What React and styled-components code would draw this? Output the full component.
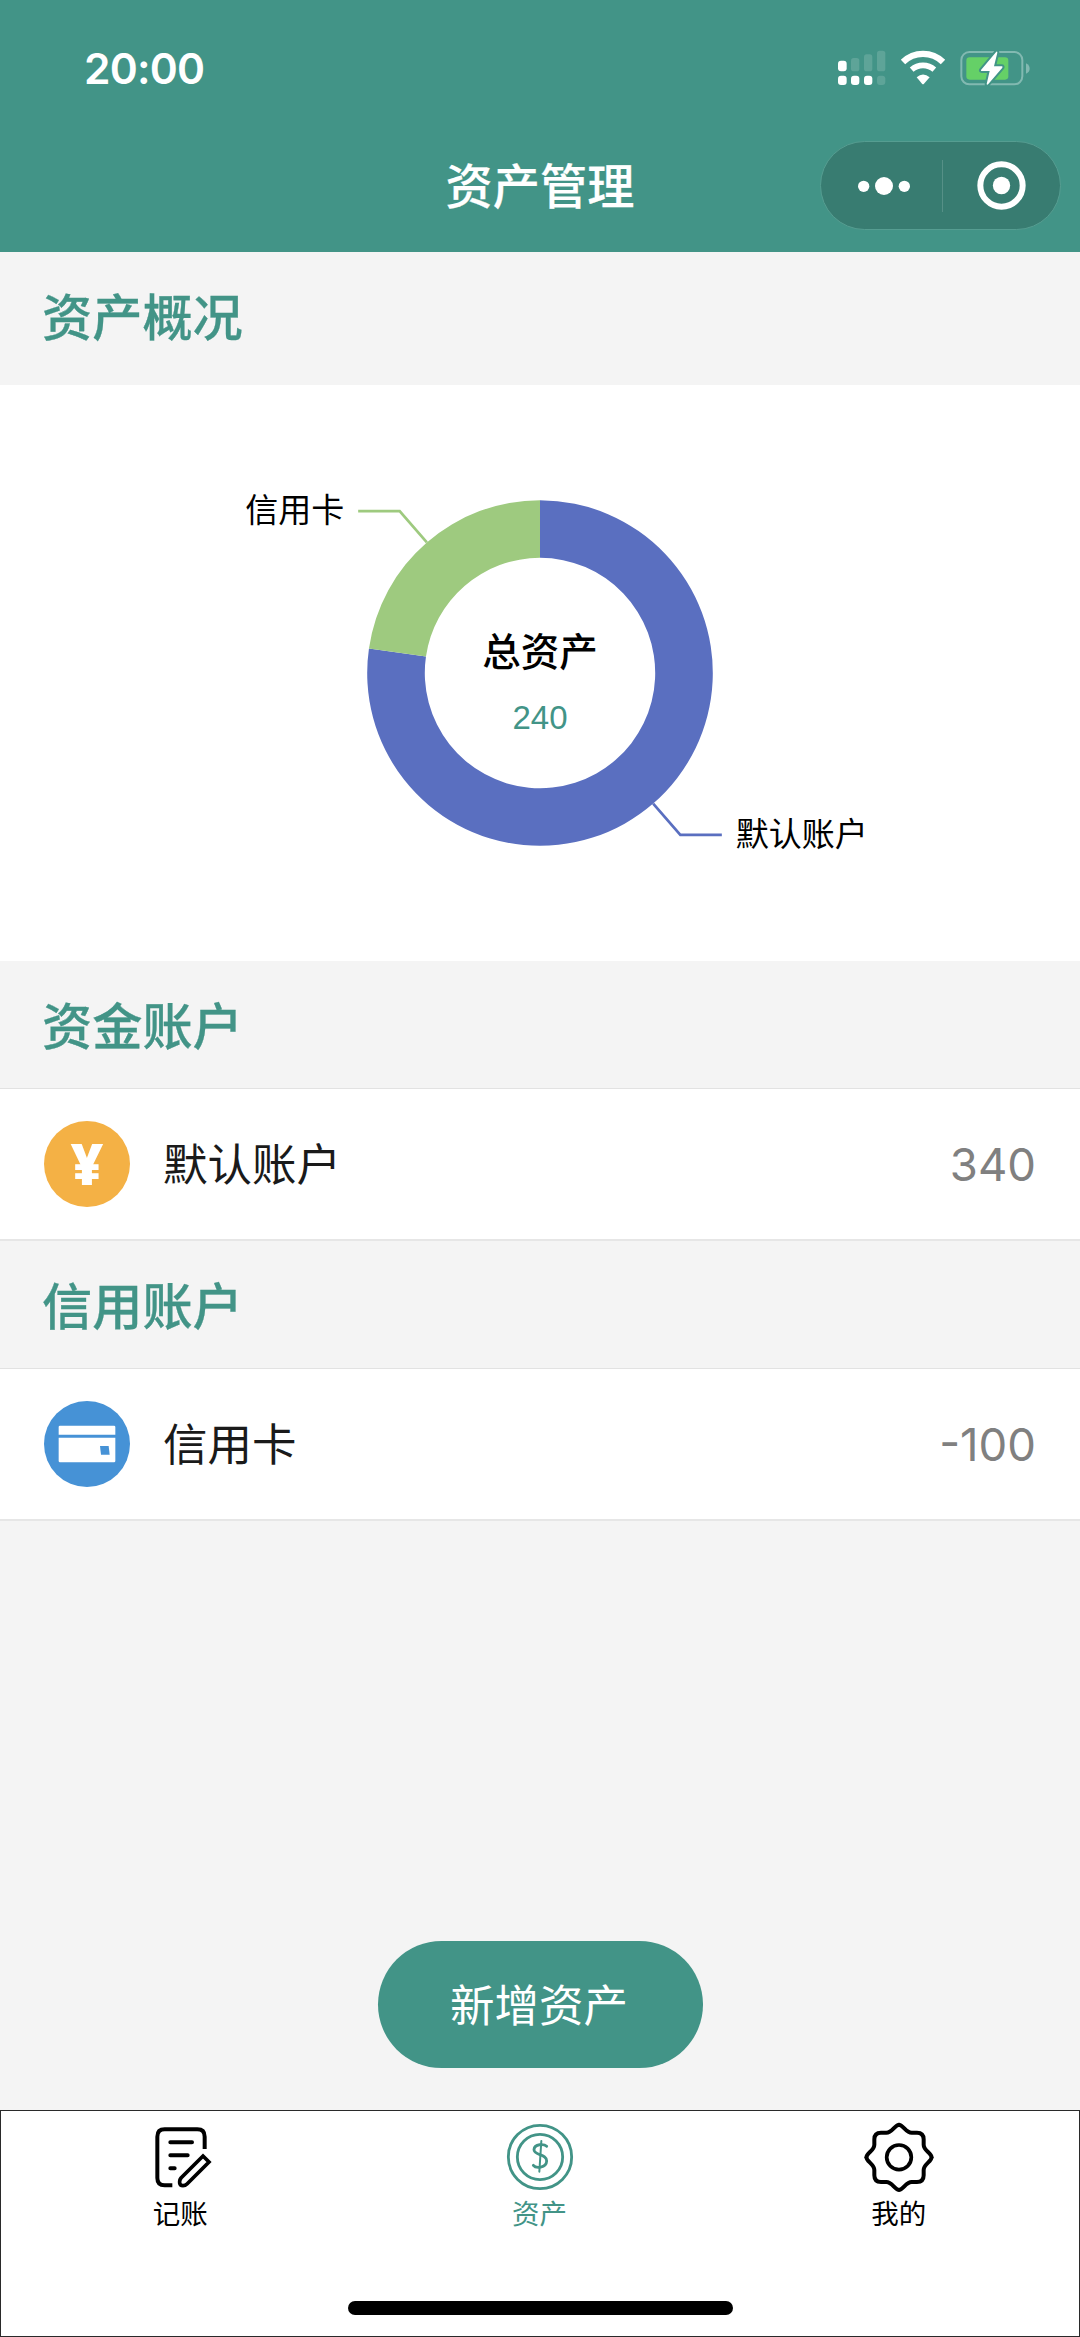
import React from 'react'
import styled, { createGlobalStyle } from 'styled-components'

const teal = '#429487'

const accountGroups = [
  { title: '资金账户', items: [{ name: '默认账户', amount: 340, type: 'cash' }] },
  { title: '信用账户', items: [{ name: '信用卡', amount: -100, type: 'card' }] },
]

const chartData = [
  { name: '默认账户', value: 340, color: '#5a6fc0' },
  { name: '信用卡', value: 100, color: '#9eca7f' },
]

const SignalIcon = () => (
  <svg width="48" height="36" viewBox="171 93 144 108" fill="#fff">
    <rect x="171" y="125" width="26" height="32" rx="9" />
    <rect x="210" y="117" width="25" height="40" rx="8" fillOpacity="0.15" />
    <rect x="249" y="106" width="25" height="51" rx="8" fillOpacity="0.15" />
    <rect x="288" y="95" width="25" height="62" rx="8" fillOpacity="0.15" />
    <rect x="171" y="170" width="26" height="28" rx="9" />
    <rect x="210" y="170" width="25" height="28" rx="9" />
    <rect x="249" y="170" width="25" height="28" rx="9" />
    <rect x="288" y="170" width="25" height="28" rx="9" fillOpacity="0.15" />
  </svg>
)

const WifiIcon = () => (
  <svg width="46" height="36" viewBox="357 90 138 108" fill="none" stroke="#fff">
    <path d="M366 126A86 86 0 0 1 486 126" strokeWidth="19" />
    <path d="M392 149A52 52 0 0 1 460 149" strokeWidth="17" />
    <path d="M407 172Q426 155 446 172L429 191Q426 194 423 191Z" fill="#fff" stroke="none" />
  </svg>
)

const BatteryIcon = () => (
  <svg width="70" height="36" viewBox="539 90 210 108">
    <rect x="543" y="96" width="183" height="97" rx="24" fill="none" stroke="#82b9b1" strokeWidth="6" />
    <rect x="558" y="112" width="126" height="67" rx="10" fill="#65d067" />
    <path d="M737 130Q748 136 748 146Q748 156 737 161Z" fill="#82b9b1" />
    <path
      d="M648 95L602 150Q601 153 604 153H628L619 192Q620 197 624 192L666 143Q668 139 664 139H641L651 98Q651 93 648 95Z"
      fill="#fff" stroke={teal} strokeWidth="12" paintOrder="stroke" strokeLinejoin="round"
    />
  </svg>
)

const MoreIcon = () => (
  <svg width="52" height="18" viewBox="0 0 156 54" fill="#fff">
    <circle cx="17" cy="28" r="17" />
    <circle cx="78" cy="27" r="27" />
    <circle cx="139" cy="28" r="17" />
  </svg>
)

const CloseIcon = () => (
  <svg width="49" height="49" viewBox="0 0 147 147">
    <circle cx="73.5" cy="73.5" r="63.5" fill="none" stroke="#fff" strokeWidth="18" />
    <circle cx="73.5" cy="73.5" r="26" fill="#fff" />
  </svg>
)

const CardIcon = () => (
  <svg width="58" height="38" viewBox="0 0 174 114">
    <path d="M2 29V6Q2 2 6 2H168Q172 2 172 6V29Z" fill="#fff" />
    <path d="M2 38H172V108Q172 112 168 112H6Q2 112 2 108Z" fill="#fff" />
    <path d="M126 63H152L155 89H129Z" fill="#4692d6" />
  </svg>
)

const NoteIcon = () => (
  <svg width="74" height="74" viewBox="0 0 222 222" fill="none" stroke="currentColor" strokeWidth="12">
    <path d="M182 87V50Q182 28 160 28H62Q40 28 40 50V174Q40 196 62 196H85" />
    <path d="M79 67H144M79 105.500H131M79 144.500H92" strokeLinecap="round" />
    <path d="M177 108L195 126L129 192Q124 197 117 197Q108 197 107 189V184Q107 179 111 174Z" strokeWidth="11" />
  </svg>
)

const CoinIcon = () => (
  <svg width="74" height="74" viewBox="0 0 222 222" fill="none" stroke="currentColor" strokeWidth="8.5">
    <circle cx="111" cy="111" r="95" />
    <circle cx="111" cy="111" r="68" />
    <path d="M115 63L109 155" strokeWidth="6" strokeLinecap="round" />
    <path d="M131 79C124 72 94 70 93 89C92 107 132 101 131 123C130 145 98 145 91 136" strokeLinecap="round" />
  </svg>
)

const GearIcon = () => (
  <svg width="74" height="74" viewBox="-111 -112 222 222" fill="none" stroke="currentColor" strokeWidth="12">
    {[0, 90, 180, 270].map((deg) => (
      <path
        key={deg}
        transform={`rotate(${deg})`}
        d="M-1 -98C13 -98 20 -74 38 -74H54Q74 -74 74 -54V-38C74 -20 98 -13 98 1"
      />
    ))}
    <circle r="37" strokeWidth="11" />
  </svg>
)

const tabs = [
  { label: '记账', icon: <NoteIcon /> },
  { label: '资产', icon: <CoinIcon />, active: true },
  { label: '我的', icon: <GearIcon /> },
]

const CX = 540
const CY = 288
const OUTER = 172.8
const INNER = 115.2
const LINE = 41.5

// angle is clockwise from 12 o'clock
const point = (r, angle) => [CX + r * Math.sin(angle), CY - r * Math.cos(angle)]

const AssetChart = () => {
  const sum = chartData.reduce((acc, d) => acc + d.value, 0)
  let start = 0

  return (
    <ChartSvg viewBox="0 0 1080 576">
      {chartData.map((d) => {
        const end = start + (d.value / sum) * Math.PI * 2
        const mid = (start + end) / 2
        const large = end - start > Math.PI ? 1 : 0
        const dir = Math.sin(mid) > 0 ? 1 : -1
        const [x1, y1] = point(OUTER, mid)
        const [x2, y2] = point(OUTER + LINE, mid)
        const x3 = x2 + dir * LINE
        const ring = `M${point(OUTER, start)}A${OUTER} ${OUTER} 0 ${large} 1 ${point(OUTER, end)}L${point(INNER, end)}A${INNER} ${INNER} 0 ${large} 0 ${point(INNER, start)}Z`
        start = end
        return (
          <g key={d.name}>
            <path d={ring} fill={d.color} />
            <polyline points={`${x1},${y1} ${x2},${y2} ${x3},${y2}`} fill="none" stroke={d.color} strokeWidth="2.7" />
            <ChartLabel x={x3 + dir * 14} y={y2 + 11} textAnchor={dir > 0 ? 'start' : 'end'}>{d.name}</ChartLabel>
          </g>
        )
      })}
      <ChartTitle x={CX} y="281">总资产</ChartTitle>
      <ChartTotal x={CX} y="344">240</ChartTotal>
    </ChartSvg>
  )
}

const App = () => {
  return (
    <Page>
      <GlobalStyle />
      <Header>
        <StatusBar>
          <Time>20:00</Time>
          <StatusIcons>
            <SignalIcon />
            <WifiIcon />
            <BatteryIcon />
          </StatusIcons>
        </StatusBar>
        <NavBar>
          <NavTitle>资产管理</NavTitle>
          <Capsule>
            <CapsuleButton><MoreIcon /></CapsuleButton>
            <CapsuleLine />
            <CapsuleButton><CloseIcon /></CapsuleButton>
          </Capsule>
        </NavBar>
      </Header>

      <Content>
        <SectionTitle $height={133}>资产概况</SectionTitle>
        <ChartPanel>
          <AssetChart />
        </ChartPanel>
        {accountGroups.map((group) => (
          <section key={group.title}>
            <SectionTitle $height={127}>{group.title}</SectionTitle>
            {group.items.map((item) => (
              <Row key={item.name}>
                <Badge $type={item.type}>
                  {item.type === 'cash' ? '¥' : <CardIcon />}
                </Badge>
                <Name>{item.name}</Name>
                <Amount>{item.amount}</Amount>
              </Row>
            ))}
          </section>
        ))}
        <AddButton>新增资产</AddButton>
      </Content>

      <TabBar>
        <TabList>
          {tabs.map((tab) => (
            <Tab key={tab.label} $active={tab.active}>
              {tab.icon}
              <TabLabel>{tab.label}</TabLabel>
            </Tab>
          ))}
        </TabList>
        <HomeIndicator />
      </TabBar>
    </Page>
  )
}

const GlobalStyle = createGlobalStyle`
  * {
    box-sizing: border-box;
  }
  body {
    margin: 0;
    background-color: #f4f4f4;
    font-family: 'Inter', 'Noto Sans CJK SC', sans-serif;
  }
  svg {
    display: block;
  }
`
const Page = styled.div`
  width: 1080px;
  height: 2337px;
  display: flex;
  flex-direction: column;
  overflow: hidden;
`
const Header = styled.header`
  height: 252px;
  background-color: ${teal};
  color: #fff;
`
const StatusBar = styled.div`
  height: 119px;
  display: flex;
  justify-content: space-between;
  padding: 44px 50px 0 84px;
`
const Time = styled.div`
  font-size: 42.5px;
  line-height: 50px;
  font-weight: 600;
  letter-spacing: -0.8px;
`
const StatusIcons = styled.div`
  display: flex;
  gap: 14px;
  padding-top: 6px;
`
const NavBar = styled.div`
  height: 133px;
  display: grid;
  grid-template-columns: 1fr auto 1fr;
  align-items: center;
  padding: 0 19px;
`
const NavTitle = styled.h1`
  grid-column: 2;
  margin: 0;
  padding-bottom: 4px;
  font-family: 'Noto Sans CJK SC', sans-serif;
  font-size: 47.2px;
  line-height: 60px;
  font-weight: 500;
  -webkit-text-stroke: 0.2px #fff;
`
const Capsule = styled.div`
  justify-self: end;
  width: 241px;
  height: 89px;
  display: flex;
  align-items: center;
  padding-left: 2px;
  border: 1px solid #569d91;
  border-radius: 45px;
  background-color: #387c71;
`
const CapsuleButton = styled.div`
  flex: 1;
  display: flex;
  justify-content: center;

  &:first-child {
    padding-left: 2px;
  }
`
const CapsuleLine = styled.div`
  width: 1px;
  height: 52px;
  background-color: #569087;
`
const Content = styled.main`
  flex: 1;
  display: flex;
  flex-direction: column;
`
const SectionTitle = styled.h2`
  height: ${(props) => props.$height}px;
  margin: 0;
  padding-left: 42px;
  font-family: 'Noto Sans CJK SC', sans-serif;
  font-size: 50.2px;
  line-height: 124px;
  font-weight: 500;
  color: ${teal};
  -webkit-text-stroke: 0.3px ${teal};
`
const ChartPanel = styled.div`
  height: 576px;
  background-color: #fff;
`
const ChartSvg = styled.svg`
  width: 1080px;
  height: 576px;
`
const ChartLabel = styled.text`
  font-family: 'Noto Sans CJK SC', sans-serif;
  font-size: 33px;
`
const ChartTitle = styled.text`
  font-family: 'Noto Sans CJK SC', sans-serif;
  font-size: 38.5px;
  font-weight: 500;
  text-anchor: middle;
`
const ChartTotal = styled.text`
  font-family: 'Liberation Sans', sans-serif;
  font-size: 33px;
  fill: ${teal};
  text-anchor: middle;
`
const Row = styled.div`
  height: 153px;
  display: flex;
  align-items: center;
  padding: 0 44px;
  border-top: 1px solid #e2e2e2;
  border-bottom: 2px solid #e6e6e6;
  background-color: #fff;
`
const Badge = styled.div`
  width: 86px;
  height: 86px;
  display: flex;
  align-items: center;
  justify-content: center;
  border-radius: 50%;
  background-color: ${(props) => (props.$type === 'cash' ? '#f4b145' : '#4692d6')};
  color: #fff;
  font-family: 'Open Sans', sans-serif;
  font-size: 56px;
  font-weight: 800;
  line-height: 80px;
  padding-bottom: ${(props) => (props.$type === 'cash' ? 3 : 0)}px;
`
const Name = styled.div`
  flex: 1;
  padding: 0 0 5px 33px;
  font-family: 'Noto Sans CJK SC', sans-serif;
  font-size: 44.5px;
  line-height: 60px;
  color: #1a1a1a;
`
const Amount = styled.div`
  font-size: 45.5px;
  color: #808080;
`
const AddButton = styled.button`
  width: 325px;
  height: 127px;
  margin: auto auto 42px;
  padding: 0 2px 4px 0;
  border: none;
  border-radius: 64px;
  background-color: ${teal};
  color: #fff;
  font-family: 'Noto Sans CJK SC', sans-serif;
  font-size: 44.5px;
`
const TabBar = styled.footer`
  height: 227px;
  display: flex;
  flex-direction: column;
  justify-content: space-between;
  align-items: center;
  padding: 9px 0 21px;
  border: 1px solid #2a2a2a;
  background-color: #fff;
`
const TabList = styled.div`
  width: 100%;
  display: flex;
`
const Tab = styled.div`
  flex: 1;
  display: flex;
  flex-direction: column;
  align-items: center;
  color: ${(props) => (props.$active ? teal : '#000')};
`
const TabLabel = styled.span`
  padding-right: 1px;
  font-family: 'Noto Sans CJK SC', sans-serif;
  font-size: 27.5px;
  line-height: 37px;
`
const HomeIndicator = styled.div`
  width: 385px;
  height: 14px;
  border-radius: 7px;
  background-color: #000;
`

export default App
